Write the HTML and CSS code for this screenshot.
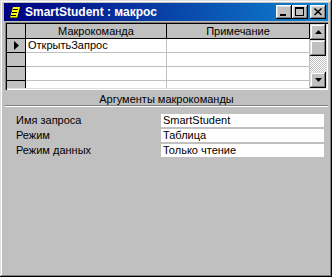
FILE: index.html
```html
<!DOCTYPE html>
<html lang="ru">
<head>
  <meta charset="UTF-8">
  <title>SmartStudent : макрос</title>
  <link rel="stylesheet" href="styles.css">
</head>
<body>

  <div class="window">
    <!-- Title bar -->
    <div class="titlebar">
      <svg class="app-icon" width="10" height="11" viewBox="0 0 10 11">
        <polygon points="3,0 10,0 7,11 0,11" fill="#ffff00"/>
        <rect x="3" y="2" width="5" height="1" fill="#000"/>
        <rect x="2" y="5" width="5" height="1" fill="#000"/>
        <rect x="1" y="8" width="5" height="1" fill="#000"/>
        <rect x="0" y="10" width="7" height="1" fill="#808000"/>
      </svg>
      <span class="title">SmartStudent : макрос</span>
      <div class="title-buttons">
        <button class="tb">
          <svg width="16" height="14" viewBox="0 0 16 14"><rect x="4" y="9" width="6" height="2" fill="#000"/></svg>
        </button>
        <button class="tb">
          <svg width="16" height="14" viewBox="0 0 16 14">
            <rect x="3" y="2" width="9" height="2" fill="#000"/>
            <rect x="3" y="2" width="1" height="9" fill="#000"/>
            <rect x="11" y="2" width="1" height="9" fill="#000"/>
            <rect x="3" y="10" width="9" height="1" fill="#000"/>
          </svg>
        </button>
        <button class="tb tb-close">
          <svg width="16" height="14" viewBox="0 0 16 14">
            <path d="M4.5 3.5l7 6.5M11.5 3.5l-7 6.5" stroke="#000" stroke-width="1.6" fill="none"/>
          </svg>
        </button>
      </div>
    </div>

    <!-- Macro sheet -->
    <div class="grid-frame">
      <div class="sheet">
        <div class="row head">
          <div class="sel"></div>
          <div class="cell">Макрокоманда</div>
          <div class="cell">Примечание</div>
        </div>
        <div class="row">
          <div class="sel">
            <svg width="5" height="9" viewBox="0 0 5 9"><polygon points="0,0 5,4.5 0,9" fill="#000"/></svg>
          </div>
          <div class="cell">ОткрытьЗапрос</div>
          <div class="cell"></div>
        </div>
        <div class="row"><div class="sel"></div><div class="cell"></div><div class="cell"></div></div>
        <div class="row"><div class="sel"></div><div class="cell"></div><div class="cell"></div></div>
        <div class="row"><div class="sel"></div><div class="cell"></div><div class="cell"></div></div>
      </div>
      <div class="vscroll">
        <div class="sb-btn">
          <svg width="7" height="4" viewBox="0 0 7 4"><polygon points="3.5,0 7,4 0,4" fill="#000"/></svg>
        </div>
        <div class="sb-btn"></div>
        <div class="sb-track"></div>
        <div class="sb-btn">
          <svg width="7" height="4" viewBox="0 0 7 4"><polygon points="0,0 7,0 3.5,4" fill="#000"/></svg>
        </div>
      </div>
    </div>

    <!-- Action arguments -->
    <div class="args-caption">Аргументы макрокоманды</div>
    <div class="args-list">
      <div class="arg"><span>Имя запроса</span><span class="arg-value">SmartStudent</span></div>
      <div class="arg"><span>Режим</span><span class="arg-value">Таблица</span></div>
      <div class="arg"><span>Режим данных</span><span class="arg-value">Только чтение</span></div>
    </div>
  </div>

</body>
</html>
```

FILE: styles.css
```css
* {
  box-sizing: border-box;
}

body {
  margin: 0;
  background-color: #c0c0c0;
  font-family: "Liberation Sans", Arial, sans-serif;
  font-size: 11px;
  color: #000;
}

.window {
  width: 332px;
  height: 277px;
  padding: 3px 4px 4px 4px;
  background-color: #c0c0c0;
  box-shadow: inset -1px -1px #000, inset 1px 1px #dfdfdf,
              inset -2px -2px #808080, inset 2px 2px #fff;
  display: flex;
  flex-direction: column;
}

.titlebar {
  height: 18px;
  display: flex;
  align-items: center;
  padding: 0 2px 0 6px;
  background: linear-gradient(90deg, #000080, #1084d0);
  color: #fff;
}

.app-icon {
  margin-right: 5px;
}

.title {
  flex: 1;
  font-size: 12px;
  font-weight: bold;
  white-space: nowrap;
}

.title-buttons {
  display: flex;
}

.tb {
  width: 16px;
  height: 14px;
  padding: 0;
  border: none;
  background-color: #c0c0c0;
  box-shadow: inset -1px -1px #000, inset 1px 1px #fff,
              inset -2px -2px #808080, inset 2px 2px #dfdfdf;
  display: block;
}

.tb svg {
  display: block;
}

.tb-close {
  margin-left: 2px;
}

.grid-frame {
  margin: 1px 0 0 1px;
  height: 68px;
  padding: 2px;
  display: flex;
  box-shadow: inset 1px 1px #808080, inset 2px 2px #000,
              inset -1px -1px #fff, inset -2px -2px #dfdfdf;
}

.sheet {
  flex: 1;
  background-color: #fff;
  overflow: hidden;
  display: flex;
  flex-direction: column;
}

.row {
  display: grid;
  grid-template-columns: 19px 141px 143px;
  height: 14px;
  flex-shrink: 0;
}

.row.head {
  height: 15px;
}

.sel {
  background-color: #c0c0c0;
  border-right: 1px solid #000;
  border-bottom: 1px solid #000;
  display: flex;
  align-items: center;
  padding-left: 7px;
}

.cell {
  border-right: 1px solid #c0c0c0;
  border-bottom: 1px solid #c0c0c0;
  padding-left: 2px;
  line-height: 13px;
  white-space: nowrap;
  overflow: hidden;
}

.head .cell {
  background-color: #c0c0c0;
  border-color: #000;
  text-align: center;
  padding: 0;
  line-height: 14px;
}

.vscroll {
  width: 16px;
  display: flex;
  flex-direction: column;
}

.sb-btn {
  height: 16px;
  background-color: #c0c0c0;
  box-shadow: inset -1px -1px #000, inset 1px 1px #dfdfdf,
              inset -2px -2px #808080, inset 2px 2px #fff;
  display: flex;
  align-items: center;
  justify-content: center;
}

.sb-track {
  flex: 1;
  background-image: conic-gradient(#fff 25%, #c0c0c0 0 50%, #fff 0 75%, #c0c0c0 0);
  background-size: 2px 2px;
}

.args-caption {
  margin-left: 1px;
  height: 16px;
  padding-top: 3px;
  line-height: 13px;
  text-align: center;
  border-bottom: 1px solid #808080;
  box-shadow: 0 1px #fff;
}

.args-list {
  padding: 8px 0 0 12px;
  display: flex;
  flex-direction: column;
  gap: 2px;
}

.arg {
  display: grid;
  grid-template-columns: 145px 163px;
  height: 13px;
  line-height: 13px;
}

.arg-value {
  background-color: #fff;
  padding-left: 2px;
  white-space: nowrap;
}
```
